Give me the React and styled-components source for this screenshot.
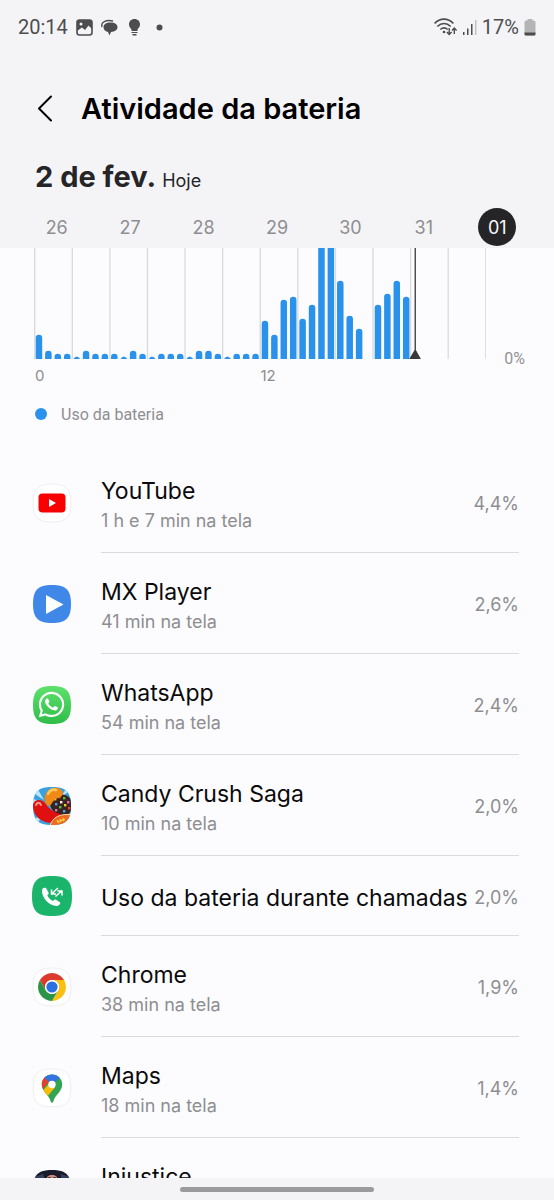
import React from 'react';
import styled, { createGlobalStyle } from 'styled-components';
import { FaWhatsapp } from 'react-icons/fa6';

const GlobalStyle = createGlobalStyle`
* { box-sizing: border-box; }
body {
margin: 0;
background-color: #fcfcfe;
font-family: Inter, 'Noto Sans', sans-serif;
}
`

const Screen = styled.div`
display: flex;
flex-direction: column;
height: 100vh;
`

const Top = styled.header`
flex: none;
background-color: #f4f4f7;
`

// status bar
const StatusBar = styled.div`
display: flex;
justify-content: space-between;
align-items: center;
height: 54px;
padding: 0 18px;
font-family: Roboto, sans-serif;
font-size: 20px;
color: #4d4d4f;
`

const StatusGroup = styled.div`
display: flex;
align-items: center;
gap: ${props => props.$gap}px;
`

const TitleBar = styled.div`
display: flex;
align-items: center;
gap: 24px;
height: 110px;
padding: 0 32px;
`

const BackButton = styled.button`
display: flex;
padding: 0;
border: 0;
background: none;
color: #000;
`

const Title = styled.h1`
margin: 0;
font-size: 29px;
font-weight: 600;
line-height: 36px;
color: #000;
`

const DateLine = styled.div`
display: flex;
align-items: baseline;
gap: 6px;
height: 36px;
padding: 0 35px;
line-height: 26px;
color: #252528;
`

const DateText = styled.h2`
margin: 0;
font-size: 29px;
font-weight: 700;
`

const Today = styled.span`
font-size: 18px;
`

const Days = styled.div`
display: grid;
grid-template-columns: repeat(7, 1fr);
justify-items: center;
padding: 8px 20px 2px;
`

const Day = styled.button`
width: 38px;
height: 38px;
padding: 0;
border: 0;
border-radius: 50%;
font: inherit;
font-size: 18px;
color: ${props => (props.$active ? '#fafafa' : '#8e8e91')};
background-color: ${props => (props.$active ? '#252527' : 'transparent')};
`

const Content = styled.main`
flex: 1;
min-height: 0;
overflow: hidden;
`

// chart
const ChartRow = styled.div`
display: flex;
align-items: flex-end;
padding: 0 29px 0 34px;
`

const Plot = styled.svg`
flex: 1;
min-width: 0;
height: 111px;
`

const ZeroLabel = styled.span`
width: 39px;
height: 10px;
line-height: 20px;
font-family: Roboto, sans-serif;
font-size: 16px;
text-align: right;
color: #929295;
`

const Hours = styled.div`
display: grid;
grid-template-columns: 1fr 1fr;
padding: 7px 68px 0 35px;
font-size: 15px;
line-height: 20px;
color: #8e8e91;
`

const Legend = styled.div`
display: flex;
align-items: center;
gap: 14px;
height: 20px;
margin: 18px 35px 28px;
font-family: Roboto, sans-serif;
font-size: 16px;
color: #8e8e91;
`

const Dot = styled.span`
width: 12px;
height: 12px;
border-radius: 50%;
background-color: #2b92ec;
`

// app list
const List = styled.ul`
margin: 0;
padding: 0;
list-style: none;
`

const Row = styled.li`
display: flex;
align-items: center;
gap: 29px;
height: ${props => (props.$single ? 80 : 101)}px;
padding: 0 35px 0 32px;
`

const Icon = styled.svg`
flex: none;
width: 40px;
height: 40px;
`

const RowBody = styled.div`
display: flex;
align-items: center;
justify-content: space-between;
flex: 1;
min-width: 0;
height: 100%;
padding-top: 4px;
border-bottom: 1px solid #dbdbde;
white-space: nowrap;
`

const Name = styled.div`
padding-top: ${props => (props.$single ? 0 : 2)}px;
font-size: 23px;
line-height: 32px;
color: #0a0a0c;
`

const Time = styled.div`
font-size: 18px;
line-height: 28px;
color: #8e8e91;
`

const Value = styled.div`
font-size: 18px;
line-height: 24px;
color: #8e8e91;
`

const NavBar = styled.footer`
display: flex;
flex: none;
justify-content: center;
align-items: center;
height: 22px;
background-color: #f4f4f6;
`

const Handle = styled.div`
width: 35%;
height: 5px;
border-radius: 3px;
background-color: #9b9b9d;
`

const SQUIRCLE = 'M20 1C34 1 39 6 39 20S34 39 20 39 1 34 1 20 6 1 20 1Z'

const days = ['26', '27', '28', '29', '30', '31', '01']

// one value per half hour
const usage = [
  24, 8, 5, 5, 3, 8, 5, 5, 5, 3, 8, 5, 3, 5, 5, 5, 3, 8, 8, 5, 3, 5, 5, 5,
  38, 24, 59, 62, 40, 54, 130, 130, 78, 43, 30, 0, 54, 65, 78, 62,
]

const Chart = () => (
  <Plot role="img" aria-label="Uso da bateria">
    {Array.from({ length: 13 }, (_, i) => (
      <rect key={i} x={`${(i * 99.8) / 12}%`} y="0" width="1.4" height="111" fill="#dcdcdf" />
    ))}
    {usage.map((v, i) => v > 0 && (
      <svg key={i} x={`${((i + 0.5) * 100) / 48}%`} overflow="visible">
        <path
          d={v < 4
            ? 'M-3 111Q0 106 4 111Z'
            : `M-3 111V${114 - v}a3.25 3.25 0 0 1 6.5 0V111Z`}
          fill="#2b92ec"
        />
      </svg>
    ))}
    <svg x="84.2%" overflow="visible">
      <path d="M0 0h1.3v102l5 9h-11.6l5.3-9Z" fill="#38383a" />
    </svg>
  </Plot>
)

const White = () => <path d={SQUIRCLE} fill="#fff" stroke="#efeff1" />

const YouTube = () => (
  <Icon viewBox="0 0 40 40">
    <White />
    <rect x="6.5" y="10.5" width="27" height="19" rx="4" fill="#f90000" />
    <path d="M17 16v8l7-4Z" fill="#fff" />
  </Icon>
)

const MxPlayer = () => (
  <Icon viewBox="0 0 40 40">
    <path d={SQUIRCLE} fill="#3f88e8" />
    <path d="M14 11v19l17.5-9.5Z" fill="#fff" />
  </Icon>
)

const WhatsApp = () => (
  <Icon viewBox="0 0 40 40">
    <defs>
      <linearGradient id="wa" x1="0" y1="0" x2="0" y2="1">
        <stop offset="0" stopColor="#5fe06c" />
        <stop offset="1" stopColor="#2fbd4a" />
      </linearGradient>
    </defs>
    <path d={SQUIRCLE} fill="url(#wa)" />
    <FaWhatsapp x="5" y="5" size={29} color="#fff" />
  </Icon>
)

const CandyCrush = () => (
  <Icon viewBox="0 0 40 40">
    <clipPath id="candy"><path d={SQUIRCLE} /></clipPath>
    <g clipPath="url(#candy)">
      <rect width="40" height="40" fill="#3b9fe0" />
      <path d="M0 6l12 8L4 0ZM40 3L28 12 36 0ZM0 33l10-3-6 10ZM0 18l8-2-8-4Z" fill="#b9e6fa" />
      <path d="M18 15C19 9 27 7 33 9s8 7 7 13-6 8-12 7-11-8-10-14Z" fill="#3b2320" />
      {[
        [23, 13, '#f2c81f'], [27, 11, '#e9483a'], [32, 12, '#58b947'], [36, 16, '#eb6db0'],
        [24, 18, '#4aa5e8'], [29, 16, '#f6f0e0'], [33, 19, '#f2c81f'], [28, 21, '#58b947'],
        [37, 22, '#e9483a'], [32, 25, '#4aa5e8'], [24, 24, '#eb6db0'],
      ].map(([x, y, c]) => <rect key={`${x}-${y}`} x={x - 1} y={y - 1} width="2.4" height="2.4" fill={c} />)}
      <path d="M13 10C15 2 23 0 28 3s3 8-2 9c-5 1-6 7-9 8-4-1-5-6-4-10Z" fill="#f08a16" />
      <path d="M16 8c2-4 5-5 8-4" fill="none" stroke="#ffc85a" strokeWidth="2.5" strokeLinecap="round" />
      <path d="M1 20C1 13 9 12 13 17c5 7 9 9 15 11 3 4-2 9-8 9C11 37 1 31 1 20Z" fill="#e01010" />
      <path d="M4 19c1-3 4-3 5 0" fill="none" stroke="#ff9a8c" strokeWidth="2" strokeLinecap="round" />
      <path d="M18 40c2-9 11-13 22-11v11Z" fill="#ef6a1e" stroke="#ffd9a8" strokeWidth="1" />
      <path d="M25 34l2 3M28 33l1 3M31 32l1 3M25 36l8-3" stroke="#ffd54a" strokeWidth="1.2" />
    </g>
  </Icon>
)

const Calls = () => (
  <Icon viewBox="0 0 40 40">
    <path d="M20 0C35 0 40 5 40 20S35 40 20 40 0 35 0 20 5 0 20 0Z" fill="#1ab56b" />
    <path d="M10 15c0-3 2-4 4-3l2.5 4.5c.5 1-.2 1.8-1.2 2.8 1.4 3 3 4.500 5.700 5.800 1-1.200 1.900-1.900 3-1.400l4 2.600c1 2-1.600 3.700-3.500 3.700C17 29.500 10 22 10 15Z" fill="#fff" />
    <path d="M26 12l-6 5.500M19.500 13.500V18H24M23.500 20.500l6-5.500M25.500 15H30v4.500" fill="none" stroke="#fff" strokeWidth="1.5" />
  </Icon>
)

const Chrome = () => (
  <Icon viewBox="0 0 40 40">
    <White />
    <g transform="translate(20 20)">
      <path d="M-12.12-7A14 14 0 0 1 12.12-7H0A7 7 0 0 0-6.06 3.5Z" fill="#dc3a2c" />
      <path d="M12.12-7A14 14 0 0 1 0 14L6.06 3.5A7 7 0 0 0 0-7Z" fill="#f9c013" />
      <path d="M0 14A14 14 0 0 1-12.12-7L-6.06 3.5A7 7 0 0 0 6.06 3.5Z" fill="#2b9447" />
      <circle r="7" fill="#fff" />
      <circle r="5.6" fill="#2a70e0" />
    </g>
  </Icon>
)

const Maps = () => (
  <Icon viewBox="0 0 40 40">
    <White />
    <clipPath id="pin">
      <path d="M20 6.5c6 0 10.2 4.5 10.2 10 0 7.5-7.2 10-8.7 16.5-.5 2.3-2.5 2.3-3 0C17 26.5 9.8 24 9.8 16.5c0-5.5 4.2-10 10.2-10Z" />
    </clipPath>
    <g clipPath="url(#pin)">
      <rect width="40" height="40" fill="#32a452" />
      <path d="M10 23.5l10-11 3 7-8.5 10Z" fill="#f9bb0c" />
      <path d="M9 22.5L20 11l-8-4-5 8Z" fill="#e2402f" />
      <path d="M12 9.500l8 7L30 8 20 3Z" fill="#3474e0" />
    </g>
    <circle cx="20" cy="16.5" r="3.7" fill="#fff" />
  </Icon>
)

const Injustice = () => (
  <Icon viewBox="0 0 40 40">
    <clipPath id="inj"><path d={SQUIRCLE} /></clipPath>
    <g clipPath="url(#inj)">
      <rect width="40" height="40" fill="#171b2c" />
      <path d="M2 8l9-3 2 6H2ZM29 5l8 3v4h-8Z" fill="#34405e" />
      <path d="M13 14C13 2 27 2 27 14v9H13Z" fill="#191113" />
      <path d="M15 8c3-3 7-3 10 0l-1 10h-8Z" fill="#c98a80" />
      <path d="M16 9h3M21 9h3" stroke="#462228" strokeWidth="1.5" />
    </g>
  </Icon>
)

const apps = [
  { name: 'YouTube', time: '1 h e 7 min na tela', value: '4,4%', icon: <YouTube /> },
  { name: 'MX Player', time: '41 min na tela', value: '2,6%', icon: <MxPlayer /> },
  { name: 'WhatsApp', time: '54 min na tela', value: '2,4%', icon: <WhatsApp /> },
  { name: 'Candy Crush Saga', time: '10 min na tela', value: '2,0%', icon: <CandyCrush /> },
  { name: 'Uso da bateria durante chamadas', value: '2,0%', icon: <Calls /> },
  { name: 'Chrome', time: '38 min na tela', value: '1,9%', icon: <Chrome /> },
  { name: 'Maps', time: '18 min na tela', value: '1,4%', icon: <Maps /> },
  { name: 'Injustice', icon: <Injustice /> },
]

const Status = () => (
  <StatusBar>
    <StatusGroup $gap={8}>
      <span>20:14</span>
      <svg width="17" height="17" viewBox="0 0 17 17">
        <rect x="1" y="1" width="15" height="15" rx="2.5" fill="none" stroke="#4d4d4f" strokeWidth="1.6" />
        <path d="M1 1h15v9l-3.5-3.5L9 11 6 8.5 1 12Z" fill="#4d4d4f" />
        <circle cx="5" cy="5" r="1.5" fill="#f4f4f7" />
      </svg>
      <svg width="17" height="17" viewBox="0 0 17 17" fill="#4d4d4f">
        <path d="M9.500 3.500C14 3.500 16.500 5.500 16.500 8.300c0 2.500-2.500 4.400-6.500 4.700L8.500 16.500 7 13C4 12.500 2.500 10.500 2.500 8.300c0-2.800 2.500-4.800 7-4.800Z" />
        <path d="M1 8C-.5 3 5 .5 12 2" fill="none" stroke="#4d4d4f" strokeWidth="1.4" />
      </svg>
      <svg width="17" height="17" viewBox="0 0 17 17" fill="#4d4d4f">
        <path d="M8.500 0C12 0 14 2.500 14 5.300c0 2.500-1.300 3.700-2.500 5.200v1.500h-6v-1.500C4.300 9 3 7.800 3 5.300 3 2.500 5 0 8.500 0Z" />
        <path d="M5.500 13h6v1h-6ZM6.500 15h4v1.500h-4Z" />
      </svg>
      <svg width="17" height="17" viewBox="0 0 17 17"><circle cx="8.5" cy="8.5" r="3" fill="#4d4d4f" /></svg>
    </StatusGroup>
    <StatusGroup $gap={5}>
      <svg width="23" height="18" viewBox="0 0 23 18" fill="none" stroke="#4d4d4f" strokeWidth="1.6">
        <path d="M.6 5.500C6-.3 14-.3 19.400 5.500M3.300 8.500c4-4 9.500-4 13.400 0M6.300 11.500c2.500-2.200 5-2.200 7.400 0" />
        <circle cx="10" cy="14" r="1.3" fill="#4d4d4f" stroke="none" />
        <path d="M15.200 10v6M12.800 14l2.400 2.500 2.400-2.500M20.300 16v-5.500M18 12.500l2.300-2.500 2.300 2.500" strokeWidth="1.4" />
      </svg>
      <svg width="15" height="16" viewBox="0 0 15 16" fill="#4d4d4f">
        <path d="M1 13h1.500v3H1ZM5 9.500h1.500V16H5ZM9 5h1.500v11H9Z" />
        <path d="M13 1h1.500v15H13Z" fill="#c2c2c5" />
      </svg>
      <span>17%</span>
      <svg width="12" height="17" viewBox="0 0 12 17">
        <path d="M3.500 0h5v1.500H10a1.500 1.500 0 0 1 1.500 1.500v12A1.500 1.500 0 0 1 10 16.500H2A1.500 1.500 0 0 1 .5 15V3A1.500 1.500 0 0 1 2 1.500h1.500Z" fill="#b4b4b6" />
        <path d="M.5 13.500h11V15a1.500 1.500 0 0 1-1.500 1.500H2A1.500 1.500 0 0 1 .5 15Z" fill="#4d4d4f" />
      </svg>
    </StatusGroup>
  </StatusBar>
)

const App = () => {
  return (
    <Screen>
      <GlobalStyle />
      <Top>
        <Status />
        <TitleBar>
          <BackButton aria-label="Voltar">
            <svg width="25" height="28" viewBox="0 0 25 28" fill="none" stroke="currentColor" strokeWidth="2" strokeLinecap="round" strokeLinejoin="round">
              <path d="M19 1.500L7 13.500l12 12" />
            </svg>
          </BackButton>
          <Title>Atividade da bateria</Title>
        </TitleBar>
        <DateLine>
          <DateText>2 de fev.</DateText>
          <Today>Hoje</Today>
        </DateLine>
        <Days>
          {days.map(d => <Day key={d} $active={d === '01'}>{d}</Day>)}
        </Days>
      </Top>
      <Content>
        <ChartRow>
          <Chart />
          <ZeroLabel>0%</ZeroLabel>
        </ChartRow>
        <Hours>
          <span>0</span>
          <span>12</span>
        </Hours>
        <Legend><Dot />Uso da bateria</Legend>
        <List>
          {apps.map(app => {
            const single = !app.time && app.value
            return (
              <Row key={app.name} $single={single}>
                {app.icon}
                <RowBody>
                  <div>
                    <Name $single={single}>{app.name}</Name>
                    {!single && <Time>{app.time || '\u00a0'}</Time>}
                  </div>
                  <Value>{app.value}</Value>
                </RowBody>
              </Row>
            )
          })}
        </List>
      </Content>
      <NavBar><Handle /></NavBar>
    </Screen>
  );
};

export default App;
